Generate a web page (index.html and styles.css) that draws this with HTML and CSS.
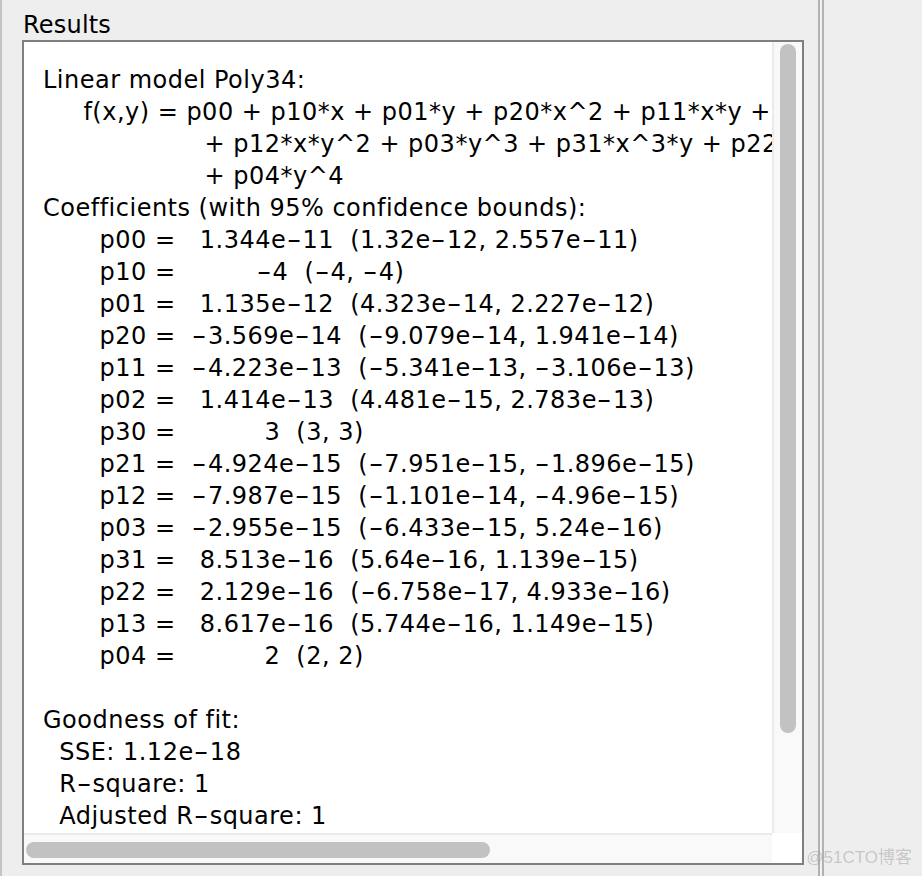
FILE: index.html
```html
<!DOCTYPE html>
<html lang="en">
<head>
<meta charset="utf-8">
<title>Results</title>
<link rel="stylesheet" href="styles.css">
</head>
<body>
<div class="frame">
  <div class="edge-left"></div>
  <section class="panel">
    <h2 class="title">Results</h2>
    <div class="box">
      <div class="output">
        <div class="line">Linear model Poly34:</div>
        <div class="line">     <span>f(x,y) = p00 + p10*x + p01*y + p20*x^2 + p11*x*y + p02*y^2 + p30*x^3 + p21*x^2*y</span></div>
        <div class="line">                    <span>+ p12*x*y^2 + p03*y^3 + p31*x^3*y + p22*x^2*y^2 + p13*x*y^3</span></div>
        <div class="line">                    <span>+ p04*y^4</span></div>
        <div class="line">Coefficients (with 95% confidence bounds):</div>
        <div class="line">       <span>p00 =</span>   <span>1.344e<span class="d">-</span>11</span>  <span>(1.32e<span class="d">-</span>12, 2.557e<span class="d">-</span>11)</span></div>
        <div class="line">       <span>p10 =</span>          <span><span class="d">-</span>4</span>  <span>(<span class="d">-</span>4, <span class="d">-</span>4)</span></div>
        <div class="line">       <span>p01 =</span>   <span>1.135e<span class="d">-</span>12</span>  <span>(4.323e<span class="d">-</span>14, 2.227e<span class="d">-</span>12)</span></div>
        <div class="line">       <span>p20 =</span>  <span><span class="d">-</span>3.569e<span class="d">-</span>14</span>  <span>(<span class="d">-</span>9.079e<span class="d">-</span>14, 1.941e<span class="d">-</span>14)</span></div>
        <div class="line">       <span>p11 =</span>  <span><span class="d">-</span>4.223e<span class="d">-</span>13</span>  <span>(<span class="d">-</span>5.341e<span class="d">-</span>13, <span class="d">-</span>3.106e<span class="d">-</span>13)</span></div>
        <div class="line">       <span>p02 =</span>   <span>1.414e<span class="d">-</span>13</span>  <span>(4.481e<span class="d">-</span>15, 2.783e<span class="d">-</span>13)</span></div>
        <div class="line">       <span>p30 =</span>           <span>3</span>  <span>(3, 3)</span></div>
        <div class="line">       <span>p21 =</span>  <span><span class="d">-</span>4.924e<span class="d">-</span>15</span>  <span>(<span class="d">-</span>7.951e<span class="d">-</span>15, <span class="d">-</span>1.896e<span class="d">-</span>15)</span></div>
        <div class="line">       <span>p12 =</span>  <span><span class="d">-</span>7.987e<span class="d">-</span>15</span>  <span>(<span class="d">-</span>1.101e<span class="d">-</span>14, <span class="d">-</span>4.96e<span class="d">-</span>15)</span></div>
        <div class="line">       <span>p03 =</span>  <span><span class="d">-</span>2.955e<span class="d">-</span>15</span>  <span>(<span class="d">-</span>6.433e<span class="d">-</span>15, 5.24e<span class="d">-</span>16)</span></div>
        <div class="line">       <span>p31 =</span>   <span>8.513e<span class="d">-</span>16</span>  <span>(5.64e<span class="d">-</span>16, 1.139e<span class="d">-</span>15)</span></div>
        <div class="line">       <span>p22 =</span>   <span>2.129e<span class="d">-</span>16</span>  <span>(<span class="d">-</span>6.758e<span class="d">-</span>17, 4.933e<span class="d">-</span>16)</span></div>
        <div class="line">       <span>p13 =</span>   <span>8.617e<span class="d">-</span>16</span>  <span>(5.744e<span class="d">-</span>16, 1.149e<span class="d">-</span>15)</span></div>
        <div class="line">       <span>p04 =</span>           <span>2</span>  <span>(2, 2)</span></div>
        <div class="line"> </div>
        <div class="line">Goodness of fit:</div>
        <div class="line">  <span>SSE: 1.12e<span class="d">-</span>18</span></div>
        <div class="line">  <span>R<span class="d">-</span>square: 1</span></div>
        <div class="line">  <span>Adjusted R<span class="d">-</span>square: 1</span></div>
      </div>
      <div class="vscroll"><div class="vthumb"></div></div>
      <div class="hscroll"><div class="hthumb"></div></div>
      <div class="corner"></div>
    </div>
  </section>
  <div class="divider"></div>
  <div class="side"></div>
</div>
<div class="watermark">@51CTO博客</div>
</body>
</html>
```

FILE: styles.css
```css
html, body {
  margin: 0;
  padding: 0;
}
body {
  width: 922px;
  height: 876px;
  overflow: hidden;
  background: #eeeeee;
  font-family: "DejaVu Sans", "Noto Sans", sans-serif;
  color: #000;
  position: relative;
}
.frame {
  display: flex;
  height: 876px;
}
.edge-left {
  width: 2px;
  background: #c4c4c4;
  flex: none;
}
.panel {
  width: 816px;
  flex: none;
  box-sizing: border-box;
  padding: 10px 14px 0 20px;
  display: flex;
  flex-direction: column;
}
.title {
  margin: 0;
  font-weight: normal;
  font-size: 24px;
  line-height: 30px;
  height: 30px;
  padding-left: 1px;
  letter-spacing: 0.2px;
}
.box {
  border: 2px solid #7f7f7f;
  width: 778px;
  height: 821px;
  background: #ffffff;
  display: grid;
  grid-template-columns: 748px 30px;
  grid-template-rows: 791px 30px;
}
.output {
  padding: 22px 0 0 19px;
  font-family: "DejaVu Sans", sans-serif;
  font-size: 24px;
  line-height: 32px;
  letter-spacing: 0.5px;
  word-spacing: -0.05px;
  overflow: hidden;
  display: flex;
  flex-direction: column;
}
.line {
  white-space: pre;
  height: 32px;
  flex: none;
}
.d {
  display: inline-block;
  transform: scaleX(1.7);
  margin: 0 3.5px;
}
.vscroll {
  background: #f9f9f9;
  border-left: 2px solid #ebebeb;
  display: flex;
  justify-content: center;
  padding-top: 2px;
  box-sizing: border-box;
}
.vthumb {
  width: 16px;
  height: 689px;
  border-radius: 8px;
  background: #c2c2c2;
}
.hscroll {
  background: #f9f9f9;
  border-top: 2px solid #ebebeb;
  padding: 7px 0 0 2px;
  box-sizing: border-box;
}
.hthumb {
  width: 464px;
  height: 16px;
  border-radius: 8px;
  background: #c2c2c2;
}
.corner {
  background: #ffffff;
}
.divider {
  width: 6px;
  flex: none;
  box-sizing: border-box;
  border-left: 2px solid #b2b2b2;
  border-right: 2px solid #b2b2b2;
  background: #f2f2f2;
}
.side {
  flex: 1;
  background: #eeeeee;
}
.watermark {
  position: absolute;
  right: 10px;
  bottom: 8px;
  font-family: "Liberation Sans", "Noto Sans CJK SC", sans-serif;
  font-size: 17px;
  line-height: 20px;
  color: rgba(150, 150, 150, 0.45);
}
```
